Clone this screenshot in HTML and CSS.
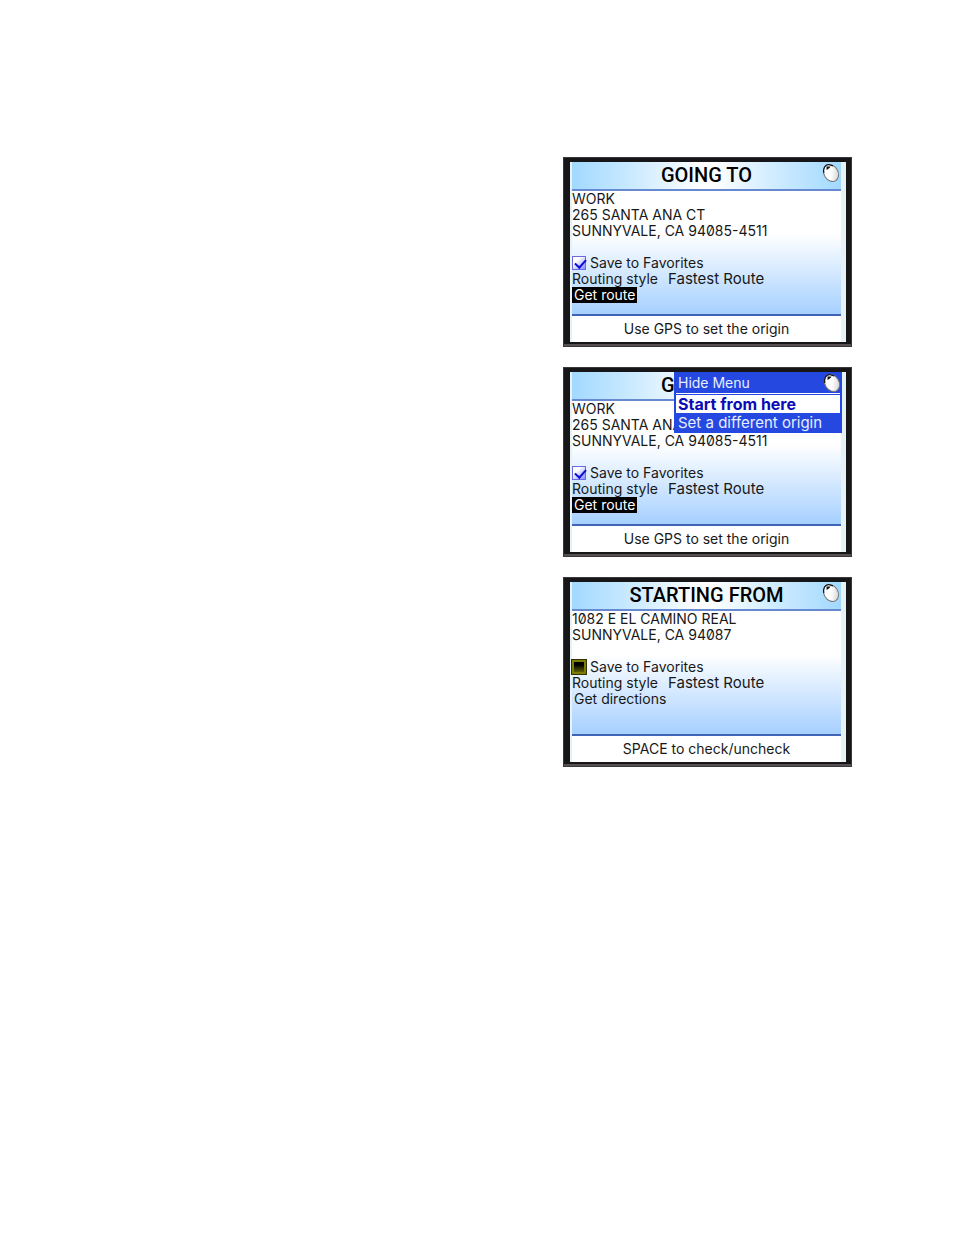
FILE: index.html
```html
<!DOCTYPE html>
<html lang="en">
<head>
<meta charset="utf-8">
<title>Route planning</title>
<link rel="stylesheet" href="styles.css">
</head>
<body>
<svg width="0" height="0" class="defs" aria-hidden="true">
  <defs>
    <linearGradient id="shell" x1="0" y1="0" x2="1" y2="1">
      <stop offset="0.5" stop-color="#fff"/>
      <stop offset="1" stop-color="#c4c4c4"/>
    </linearGradient>
    <symbol id="mouse" viewBox="0 0 18 20">
      <ellipse cx="9" cy="10" rx="7" ry="9" transform="rotate(-32 9 10)" fill="url(#shell)" stroke="#777" stroke-width="1"/>
      <path d="M1.8 10C1 5 3 1.8 6.5 1.5L11 2.8" fill="none" stroke="#111" stroke-width="1.2"/>
      <path d="M4.5 3.5L8.5 3.5L7.5 5L4.6 7Z" fill="#111"/>
    </symbol>
  </defs>
</svg>
<main class="page">
  <section class="device">
    <div class="screen">
      <header class="bar">
        <h2 class="title">GOING TO</h2>
        <svg class="mouse"><use href="#mouse"/></svg>
      </header>
      <div class="body">
        <p class="line">WORK</p>
        <p class="line">265 SANTA ANA CT</p>
        <p class="line">SUNNYVALE, CA 94085-4511</p>
        <div class="option spaced">
          <input class="check" type="checkbox" id="fav1" checked>
          <label for="fav1">Save to Favorites</label>
        </div>
        <div class="style">
          <label for="style1">Routing style</label>
          <select class="select" id="style1"><option>Fastest Route</option></select>
        </div>
        <button class="action selected" type="button">Get route</button>
      </div>
      <footer class="hint">Use GPS to set the origin</footer>
    </div>
  </section>

  <section class="device">
    <div class="screen">
      <header class="bar">
        <h2 class="title">GOING TO</h2>
      </header>
      <div class="body">
        <p class="line">WORK</p>
        <p class="line">265 SANTA ANA CT</p>
        <p class="line">SUNNYVALE, CA 94085-4511</p>
        <div class="option spaced">
          <input class="check" type="checkbox" id="fav2" checked>
          <label for="fav2">Save to Favorites</label>
        </div>
        <div class="style">
          <label for="style2">Routing style</label>
          <select class="select" id="style2"><option>Fastest Route</option></select>
        </div>
        <button class="action selected" type="button">Get route</button>
      </div>
      <footer class="hint">Use GPS to set the origin</footer>
      <div class="menu">
        <button class="item first" type="button">Hide Menu</button>
        <button class="item current" type="button">Start from here</button>
        <button class="item" type="button">Set a different origin</button>
        <svg class="mouse"><use href="#mouse"/></svg>
      </div>
    </div>
  </section>

  <section class="device">
    <div class="screen">
      <header class="bar">
        <h2 class="title">STARTING FROM</h2>
        <svg class="mouse"><use href="#mouse"/></svg>
      </header>
      <div class="body">
        <p class="line">1082 E EL CAMINO REAL</p>
        <p class="line">SUNNYVALE, CA 94087</p>
        <div class="option spaced">
          <input class="check focused" type="checkbox" id="fav3">
          <label for="fav3">Save to Favorites</label>
        </div>
        <div class="style">
          <label for="style3">Routing style</label>
          <select class="select" id="style3"><option>Fastest Route</option></select>
        </div>
        <button class="action" type="button">Get directions</button>
      </div>
      <footer class="hint">SPACE to check/uncheck</footer>
    </div>
  </section>
</main>
</body>
</html>
```
FILE: styles.css
```css
* { box-sizing: border-box; }
body {
  margin: 0;
  background: #fff;
  color: #181818;
  font: 14px/16px Inter, Roboto, sans-serif;
  font-feature-settings: "zero";
}
button, select { font: inherit; font-feature-settings: inherit; color: inherit; }
.defs { position: absolute; }
.page {
  display: flex;
  flex-direction: column;
  align-items: flex-end;
  gap: 20px;
  padding: 157px 102px 40px 20px;
}
.device {
  width: 289px;
  max-width: 100%;
  padding: 5px 5px 4px 7px;
  background: #161618;
  border: solid #39393d;
  border-width: 0 1px 1px 0;
  box-shadow: inset 1px 1px 0 #39393d, inset 0 -2px 0 #55504f;
}
.screen {
  position: relative;
  display: flex;
  flex-direction: column;
  min-height: 180px;
  border: solid #e6f3f6;
  border-width: 0 5px 0 2px;
}
.bar {
  position: relative;
  display: flex;
  justify-content: center;
  padding: 1px 0 2px;
  border-bottom: 2px solid #6689cf;
  background: linear-gradient(90deg, #a2d9ff, #d0ecff 25%, #fff 48%, #fff 52%, #d0ecff 75%, #a2d9ff);
}
.title {
  margin: 0;
  font: 500 20px/24px Roboto, sans-serif;
  color: #000;
}
.mouse {
  position: absolute;
  top: 1px;
  right: 1px;
  width: 18px;
  height: 20px;
}
.body {
  flex: 1;
  padding-bottom: 11px;
  background: linear-gradient(#fff 35%, #a6d0ff);
}
.line { margin: 0; white-space: nowrap; }
.option { display: flex; align-items: center; gap: 4px; height: 16px; }
.spaced { margin-top: 16px; }
.check {
  appearance: none;
  width: 14px;
  height: 14px;
  margin: 0;
  border: 1px solid #6a6ae8;
  background: linear-gradient(135deg, #fff 30%, #8a8aff);
  position: relative;
}
.check:checked::after {
  content: "";
  position: absolute;
  left: 4px;
  top: 0;
  width: 5px;
  height: 9px;
  border: solid #0c0cd8;
  border-width: 0 2px 2px 0;
  transform: rotate(42deg);
}
.focused {
  border: 2px solid #7c7c00;
  outline: 1px solid #333300;
  background: linear-gradient(#000 30%, #5f5f00);
}
.style { display: flex; gap: 10px; white-space: nowrap; }
.select {
  appearance: none;
  border: 0;
  padding: 0;
  height: 16px;
  background: none;
  font-size: 15px;
}
.action {
  display: block;
  height: 16px;
  padding: 0 2px;
  border: 0;
  background: none;
}
.selected { background: #000; color: #fff; }
.hint {
  padding: 5px 0;
  border-top: 2px solid #4065b6;
  background: #fff;
  text-align: center;
}
.menu {
  position: absolute;
  top: 0;
  right: -1px;
  display: flex;
  flex-direction: column;
  width: 168px;
  background: #2448e0;
}
.item {
  height: 20px;
  padding: 0 4px;
  border: 0;
  background: none;
  color: #e8eeff;
  font-size: 15px;
  text-align: left;
  white-space: nowrap;
}
.first { height: 22px; font-size: 14px; }
.current {
  height: 18px;
  margin: 1px 2px 0;
  padding: 0 2px;
  box-shadow: 0 -1px 0 #2448e0, 0 -2px 0 #fff;
  background: #fff;
  color: #0b0bb5;
  font-size: 16px;
  font-weight: 700;
}
```
